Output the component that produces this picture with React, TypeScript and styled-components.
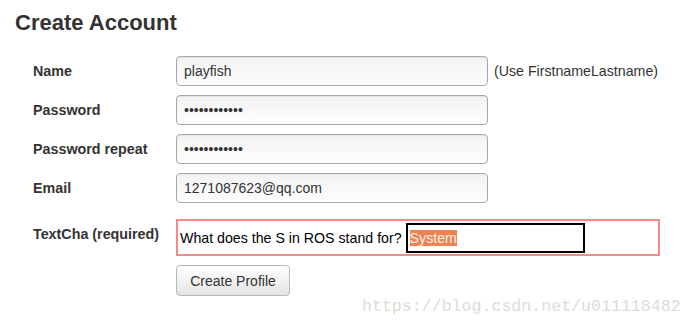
import React from "react";
import styled, { createGlobalStyle } from "styled-components";

const Global = createGlobalStyle`
  html, body { margin: 0; padding: 0; background: #fff; }
  body { font-family: "Liberation Sans", Arial, sans-serif; color: #333; }
`;

const Page = styled.div`
  position: relative;
  width: 693px;
  height: 329px;
  padding: 9px 0 0 15px;
  box-sizing: border-box;
  overflow: hidden;
`;

const Title = styled.h1`
  margin: 0 0 20px 0;
  font-size: 22px;
  line-height: 27px;
  font-weight: bold;
  color: #333;
`;

const Form = styled.div`
  display: grid;
  grid-template-columns: 143px auto;
  row-gap: 9px;
  padding-left: 18px;
  align-items: center;
`;

const Label = styled.div<{ $top?: boolean }>`
  font-size: 14.3px;
  font-weight: bold;
  color: #333;
  line-height: 20px;
  align-self: ${(p) => (p.$top ? "start" : "center")};
  padding-top: ${(p) => (p.$top ? "12px" : "0")};
`;

const Field = styled.div`
  display: flex;
  align-items: center;
  gap: 6px;
`;

const TextInput = styled.div`
  box-sizing: border-box;
  width: 312px;
  height: 30px;
  border: 1px solid #a8a8a8;
  border-radius: 4px;
  background: linear-gradient(#f3f3f3, #fdfdfd);
  box-shadow: inset 0 1px 1px rgba(0, 0, 0, 0.06);
  padding: 0 7px;
  display: flex;
  align-items: center;
  font-size: 14px;
  color: #333;
`;

const Dots = styled.span`
  font-size: 14px;
  letter-spacing: 0;
  color: #333;
`;

const Hint = styled.span`
  font-size: 14.2px;
  color: #333;
`;

const CaptchaBox = styled.div`
  box-sizing: border-box;
  width: 484px;
  height: 37px;
  border: 2px solid #f58a8a;
  display: flex;
  align-items: center;
  padding-left: 2px;
  gap: 4px;
  font-size: 14.2px;
  color: #000;
  margin-top: 7px;
`;

const CaptchaField = styled.div`
  box-sizing: border-box;
  width: 179px;
  height: 30px;
  border: 2px solid #000;
  padding: 0 2px;
  display: flex;
  align-items: center;
  font-size: 14.2px;
`;

const Selected = styled.span`
  background: #ee8250;
  color: #fff3ea;
  line-height: 16px;
`;

const Spacer = styled.span``;

const Button = styled.button`
  box-sizing: border-box;
  width: 114px;
  height: 31px;
  border: 1px solid #b8b8b8;
  border-radius: 4px;
  background: linear-gradient(#ffffff, #e4e4e4);
  font-family: "Liberation Sans", Arial, sans-serif;
  font-size: 14px;
  color: #333;
  padding: 0;
`;

const Watermark = styled.div`
  position: absolute;
  left: 362px;
  top: 297px;
  font-family: "Liberation Mono", "Courier New", monospace;
  font-size: 16.6px;
  color: #dedcd6;
  white-space: nowrap;
`;

export default function App() {
  return (
    <Page>
      <Global />
      <Title>Create Account</Title>
      <Form>
        <Label>Name</Label>
        <Field>
          <TextInput>playfish</TextInput>
          <Hint>(Use FirstnameLastname)</Hint>
        </Field>
        <Label>Password</Label>
        <Field>
          <TextInput>
            <Dots>••••••••••••</Dots>
          </TextInput>
        </Field>
        <Label>Password repeat</Label>
        <Field>
          <TextInput>
            <Dots>••••••••••••</Dots>
          </TextInput>
        </Field>
        <Label>Email</Label>
        <Field>
          <TextInput>1271087623@qq.com</TextInput>
        </Field>
        <Label $top>TextCha (required)</Label>
        <Field>
          <CaptchaBox>
            <span>What does the S in ROS stand for?</span>
            <CaptchaField>
              <Selected>System</Selected>
            </CaptchaField>
          </CaptchaBox>
        </Field>
        <Spacer />
        <Field>
          <Button>Create Profile</Button>
        </Field>
      </Form>
      <Watermark>https://blog.csdn.net/u011118482</Watermark>
    </Page>
  );
}
